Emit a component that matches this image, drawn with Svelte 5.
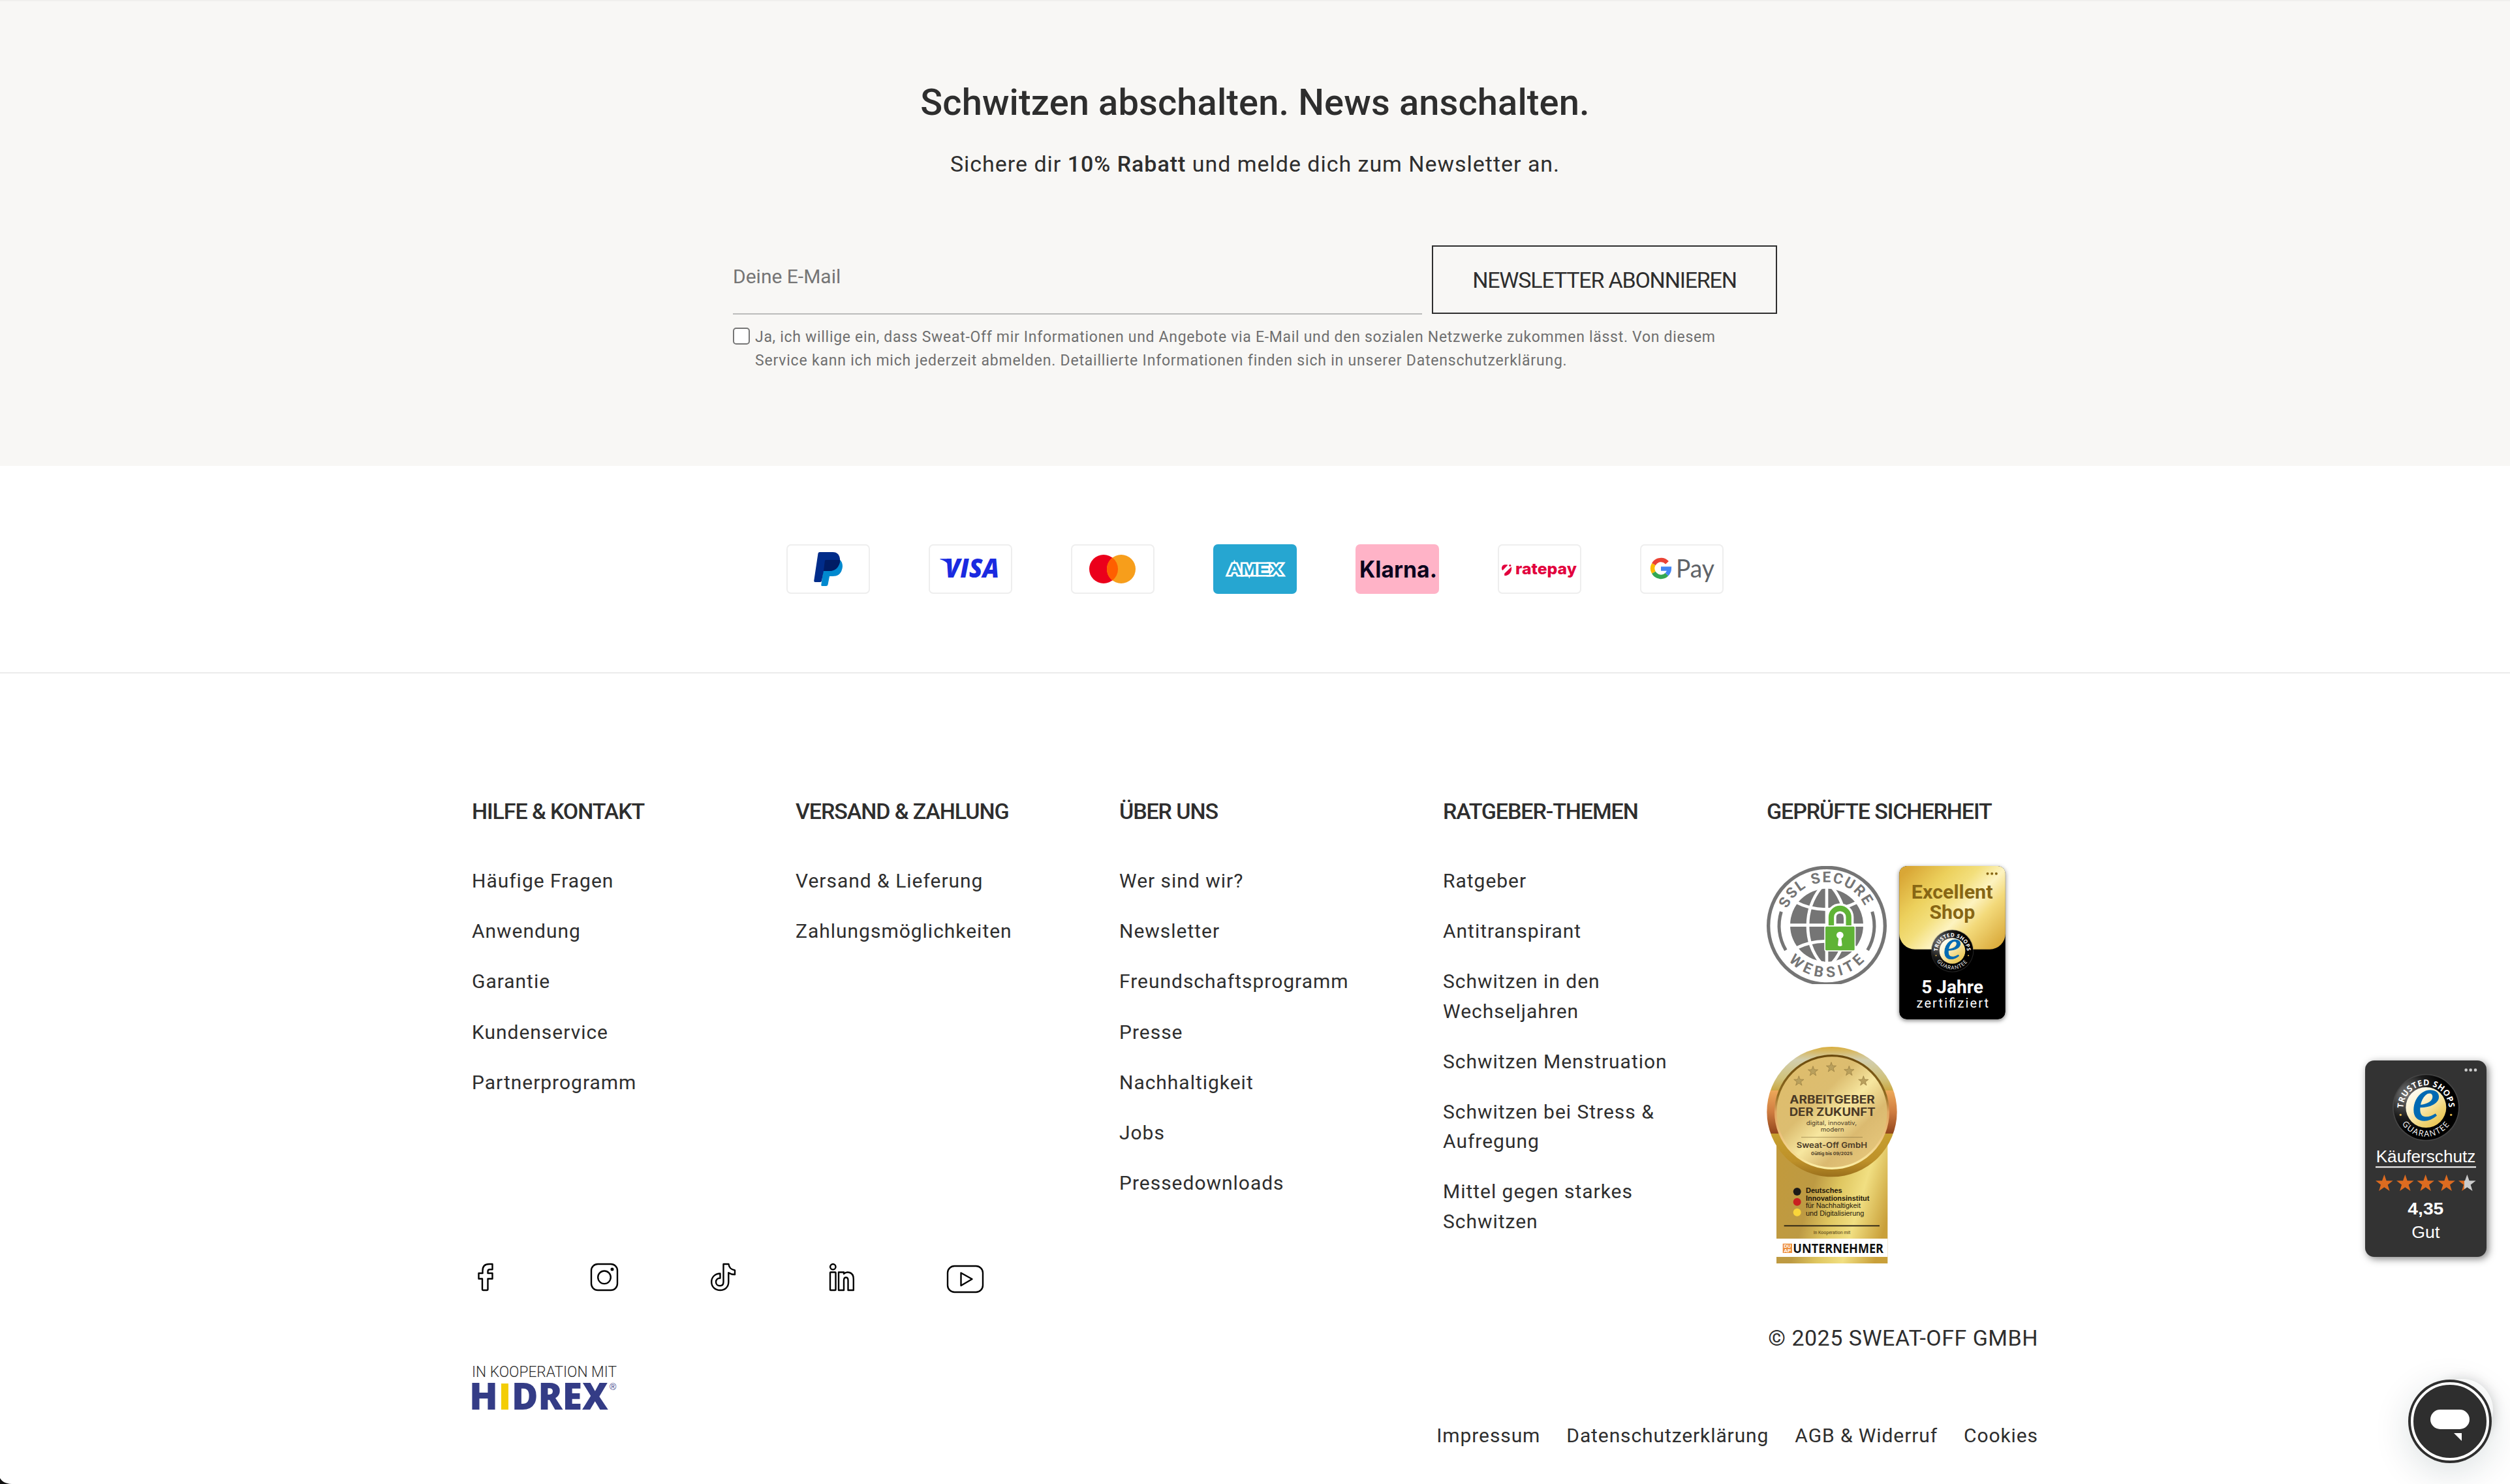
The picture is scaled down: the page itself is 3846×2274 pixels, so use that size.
<script>
  const columns = [
    {
      title: "HILFE & KONTAKT",
      links: ["Häufige Fragen", "Anwendung", "Garantie", "Kundenservice", "Partnerprogramm"],
    },
    {
      title: "VERSAND & ZAHLUNG",
      links: ["Versand & Lieferung", "Zahlungsmöglichkeiten"],
    },
    {
      title: "ÜBER UNS",
      links: [
        "Wer sind wir?",
        "Newsletter",
        "Freundschaftsprogramm",
        "Presse",
        "Nachhaltigkeit",
        "Jobs",
        "Pressedownloads",
      ],
    },
    {
      title: "RATGEBER-THEMEN",
      links: [
        "Ratgeber",
        "Antitranspirant",
        "Schwitzen in den Wechseljahren",
        "Schwitzen Menstruation",
        "Schwitzen bei Stress & Aufregung",
        "Mittel gegen starkes Schwitzen",
      ],
    },
  ];

  const legal = ["Impressum", "Datenschutzerklärung", "AGB & Widerruf", "Cookies"];

  const awardStars = [
    [199, 200],
    [264, 155],
    [348, 137],
    [430, 154],
    [496, 200],
  ];
  const ratingStars = [160, 256, 350, 446, 541];

  const star = (cx, cy, r) => {
    const points = [];
    for (let i = 0; i < 10; i++) {
      const radius = i % 2 ? r * 0.4 : r;
      const a = (Math.PI / 5) * i - Math.PI / 2;
      points.push(`${(cx + radius * Math.cos(a)).toFixed(1)},${(cy + radius * Math.sin(a)).toFixed(1)}`);
    }
    return points.join(" ");
  };

  let email = "";
  let consent = false;
</script>

<!-- Trusted Shops seal, drawn around 0,0 with a radius of 150 -->
{#snippet seal(id)}
  <defs>
    <radialGradient id="{id}-rim" cx="0.2" cy="0.3" r="0.6">
      <stop offset="0" stop-color="#777" />
      <stop offset="0.6" stop-color="#1c1c1c" />
      <stop offset="1" stop-color="#000" />
    </radialGradient>
    <linearGradient id="{id}-gold" x1="0.1" y1="0" x2="0.9" y2="1">
      <stop offset="0" stop-color="#fff" />
      <stop offset="0.35" stop-color="#fdf3cf" />
      <stop offset="0.7" stop-color="#f0d475" />
      <stop offset="1" stop-color="#e6bf45" />
    </linearGradient>
    <path id="{id}-top" d="M-105 4 A105 105 0 0 1 105 4" />
    <path id="{id}-bottom" d="M-111 75 A134 134 0 0 0 111 75" />
  </defs>
  <circle r="154" fill="#666" opacity="0.35" />
  <circle r="149" fill="url(#{id}-rim)" />
  <circle r="93" fill="url(#{id}-gold)" />
  <text class="seal-text" font-weight="700"><textPath href="#{id}-top" textLength="326">TRUSTED SHOPS</textPath></text>
  <text class="seal-text"><textPath href="#{id}-bottom" textLength="256">GUARANTEE</textPath></text>
  <circle cx="-117" cy="34" r="5" fill="#e9bb4c" />
  <circle cx="115" cy="34" r="5" fill="#e9bb4c" />
  <text class="seal-e" x="-63" y="57">e</text>
{/snippet}

<div class="page">
  <section class="newsletter">
    <h2>Schwitzen abschalten. News anschalten.</h2>
    <p class="sub">Sichere dir <strong>10% Rabatt</strong> und melde dich zum Newsletter an.</p>
    <form on:submit|preventDefault>
      <div class="row">
        <input class="email" type="text" placeholder="Deine E-Mail" bind:value={email} />
        <button type="submit">NEWSLETTER ABONNIEREN</button>
      </div>
      <label class="consent">
        <input type="checkbox" bind:checked={consent} />
        <span>
          Ja, ich willige ein, dass Sweat-Off mir Informationen und Angebote via E-Mail und den sozialen Netzwerke zukommen lässt. Von diesem<br />
          <span class="line2">Service kann ich mich jederzeit abmelden. Detaillierte Informationen finden sich in unserer Datenschutzerklärung.</span>
        </span>
      </label>
    </form>
  </section>

  <section class="payments">
    <svg class="card" viewBox="0 0 128 76">
      <path fill="#0089cf" d="M60 24H82C86 27 87 34 85 39C83 46 78 49 71 49H66L63.5 62Q63 64 61 64H55Q53 64 53.3 62L58.5 26Z" />
      <path fill="#002c8a" d="M51 12H71C79 12 83 18 82 27C80 36 74 41 66 41H57L54 56Q53.6 58 52 58H44Q42 58 42.2 56L48.5 14Q49 12 51 12Z" />
      <path fill="#001c64" d="M60.5 24H82Q82.3 25.5 82 27C80 36 74 41 66 41H57L58.8 26Q59 24 60.5 24Z" />
    </svg>
    <svg class="card" viewBox="0 0 128 76">
      <path fill="#1a2ae0" d="M17.5 22.3H31L34 38C30 29 25 25 17.5 23.3Z" />
      <text class="visa" x="25" y="51" textLength="83" lengthAdjust="spacingAndGlyphs">VISA</text>
    </svg>
    <svg class="card" viewBox="0 0 128 76">
      <circle cx="50" cy="38" r="22" fill="#eb001b" />
      <circle cx="77" cy="38" r="22" fill="#f79e1b" />
      <path fill="#ff5f00" d="M63.5 20.6A22 22 0 0 1 63.5 55.4A22 22 0 0 1 63.5 20.6Z" />
    </svg>
    <svg class="card amex-card" viewBox="0 0 128 76">
      <text class="amex" x="22" y="46.5" textLength="84" lengthAdjust="spacingAndGlyphs">AMEX</text>
    </svg>
    <svg class="card klarna-card" viewBox="0 0 128 76">
      <text class="klarna" x="6" y="50.5" textLength="119" lengthAdjust="spacingAndGlyphs">Klarna.</text>
    </svg>
    <svg class="card" viewBox="0 0 128 76">
      <g fill="#e2003d">
        <path d="M6 37C6 32 10 30.5 15.5 31.8L7.5 40Q6 39.5 6 37Z" />
        <path d="M21 34.5C22 42 18 48 10.5 48.3Q9.500 46.500 10.500 44.500Z" />
        <circle cx="18.8" cy="32.6" r="1.6" />
      </g>
      <text class="ratepay" x="27" y="46" textLength="94" lengthAdjust="spacingAndGlyphs">ratepay</text>
    </svg>
    <svg class="card" viewBox="0 0 128 76">
      <g fill="none" stroke-width="6.5">
        <path stroke="#ea4335" d="M41.5 28.2A12.8 12.8 0 0 0 20.9 30.6" />
        <path stroke="#fbbc04" d="M20.9 30.6A12.8 12.8 0 0 0 20.9 43.4" />
        <path stroke="#34a853" d="M20.9 43.4A12.8 12.8 0 0 0 41 46.2" />
        <path stroke="#4285f4" d="M41 46.2A12.8 12.8 0 0 0 44.8 37.5H32" />
      </g>
      <text class="gpay" x="55" y="51" textLength="59" lengthAdjust="spacingAndGlyphs">Pay</text>
    </svg>
  </section>

  <footer>
    <div class="main">
      <div class="left">
        <div class="columns">
          {#each columns as column}
            <div class="column">
              <h3>{column.title}</h3>
              <ul>
                {#each column.links as link}
                  <li>{link}</li>
                {/each}
              </ul>
            </div>
          {/each}
        </div>

        <div class="social">
          <svg width="42" height="42" viewBox="-9 0 42 42">
            <path d="M22.5 1H17.5C10 1 7.5 5.5 7.5 11V15H1.5V23.5H7V39.5Q7 41 8.5 41H14Q15.5 41 15.5 39.5V23.5H22.5V15H15.5V12C15.5 10 16.5 9.2 18.5 9.2H22.5Z" />
          </svg>
          <svg width="42" height="42" viewBox="0 0 42 42">
            <rect x="1" y="1" width="40" height="40" rx="10" />
            <circle cx="21" cy="21.3" r="9.8" />
            <circle cx="33" cy="9" r="1.3" />
          </svg>
          <svg width="42" height="42" viewBox="-2 0 42 42">
            <path d="M19.5 1H27.5C28 6.5 31.5 9.5 37 10.5V17C33 17 30 16 27.3 14.2V28.5C27.3 36 22 41 14.5 41C7 41 1.2 36 1.2 28.5C1.2 20.5 7 15.5 14.5 15.5V22.5C10.5 22.5 8 25 8 28.5C8 32 10.5 34.2 14 34.2C17.5 34.2 19.5 32 19.5 28.5Z" />
          </svg>
          <svg width="42" height="42" viewBox="-2 0 42 42">
            <circle cx="5.3" cy="5.2" r="4.2" />
            <rect x="1" y="13.5" width="8.5" height="27.5" rx="0.8" />
            <path d="M14 13.5H22V16C26 12 36.8 12 36.8 24V41H28.5V26C28.5 20 22 20 22 26V41H14Z" />
          </svg>
          <svg class="youtube" width="56" height="42" viewBox="0 0 56 42">
            <rect x="1" y="1" width="54" height="40" rx="10.5" />
            <path d="M21.5 11.5L38.5 21L21.5 31Z" />
          </svg>
        </div>

        <svg class="hidrex" width="230" height="74" viewBox="0 0 230 74">
          <text class="coop" x="0" y="23" textLength="222" lengthAdjust="spacingAndGlyphs">IN KOOPERATION MIT</text>
          <g class="brand">
            <text x="-4" y="73" textLength="44" lengthAdjust="spacingAndGlyphs">H</text>
            <rect x="45" y="33" width="11" height="40" fill="#f3cd05" />
            <text x="61" y="73" textLength="148" lengthAdjust="spacingAndGlyphs">DREX</text>
          </g>
          <text class="reg" x="211" y="43">®</text>
        </svg>
      </div>

      <div class="right">
        <h3>GEPRÜFTE SICHERHEIT</h3>
        <div class="badges">
          <svg width="184" height="181" viewBox="51 380 552 543">
            <defs>
              <path id="ssl-top" d="M146 577A195 195 0 0 1 508 577" />
              <path id="ssl-bottom" d="M152 815A238 238 0 0 0 502 815" />
            </defs>
            <circle cx="327" cy="655" r="268" fill="#fff" stroke="#757575" stroke-width="16" />
            <text class="ssl"><textPath href="#ssl-top" textLength="448">SSL SECURE</textPath></text>
            <text class="ssl"><textPath href="#ssl-bottom" textLength="392">WEBSITE</textPath></text>
            <g fill="none" stroke="#757575" stroke-width="15">
              <path d="M118 590A219 219 0 0 0 139 767" />
              <path d="M536 590A219 219 0 0 1 515 767" />
            </g>
            <circle cx="327" cy="652" r="168" fill="#757575" />
            <g fill="none" stroke="#fff" stroke-width="14">
              <path d="M327 480V825M155 652H500" />
              <path d="M300 480C220 580 220 730 300 825M354 480C434 580 434 730 354 825" />
              <path d="M190 548C270 590 384 590 464 548M190 756C270 716 384 716 464 756" />
            </g>
            <path d="M348 655V615A40 40 0 0 1 428 615V655" fill="none" stroke="#fff" stroke-width="46" />
            <path d="M348 665V615A40 40 0 0 1 428 615V665" fill="none" stroke="#5fb336" stroke-width="25" />
            <rect x="321" y="658" width="134" height="110" rx="5" fill="#5fb336" stroke="#fff" stroke-width="10" paint-order="stroke" />
            <circle cx="388" cy="698" r="16" fill="#fff" />
            <path d="M383 700L378 745Q388 753 398 745L393 700Z" fill="#fff" />
          </svg>

          <svg class="excellent" width="163" height="235" viewBox="659.5 380 489 705">
            <defs>
              <linearGradient id="foil" x1="0" y1="0.15" x2="1" y2="0.9">
                <stop offset="0" stop-color="#d9a736" />
                <stop offset="0.25" stop-color="#ecd05c" />
                <stop offset="0.42" stop-color="#f3df7c" />
                <stop offset="0.58" stop-color="#fdf3c0" />
                <stop offset="0.72" stop-color="#f3da7b" />
                <stop offset="1" stop-color="#d9a93a" />
              </linearGradient>
            </defs>
            <rect x="660" y="380" width="488" height="705" rx="34" fill="#000" />
            <path fill="url(#foil)" d="M660 414A34 34 0 0 1 694 380H1114A34 34 0 0 1 1148 414V690A72 72 0 0 1 1076 763H732A72 72 0 0 1 660 690Z" />
            <g fill="#876614">
              <circle cx="1066" cy="415" r="6" />
              <circle cx="1086" cy="415" r="6" />
              <circle cx="1106" cy="415" r="6" />
              <text class="ex-title" x="716" y="531" textLength="374" lengthAdjust="spacingAndGlyphs">Excellent</text>
              <text class="ex-title" x="799" y="623" textLength="209" lengthAdjust="spacingAndGlyphs">Shop</text>
            </g>
            <g transform="translate(904 770) scale(0.64)">{@render seal("small")}</g>
            <text class="ex-years" x="762" y="964" textLength="284" lengthAdjust="spacingAndGlyphs">5 Jahre</text>
            <text class="ex-cert" x="739" y="1031" textLength="332">zertifiziert</text>
          </svg>

          <svg class="award" width="200" height="332" viewBox="51 42 600 996">
            <defs>
              <linearGradient id="ribbon" x1="0" y1="0.3" x2="1" y2="0.7">
                <stop offset="0" stop-color="#c29a3c" />
                <stop offset="0.35" stop-color="#bd9a43" />
                <stop offset="0.55" stop-color="#dfc660" />
                <stop offset="0.75" stop-color="#f1df82" />
                <stop offset="1" stop-color="#c9a03a" />
              </linearGradient>
              <linearGradient id="ring" x1="0" y1="0" x2="0" y2="1">
                <stop offset="0" stop-color="#d9ae3e" />
                <stop offset="0.1" stop-color="#d2ceae" />
                <stop offset="0.25" stop-color="#d0c179" />
                <stop offset="0.336" stop-color="#caa845" />
                <stop offset="0.337" stop-color="#eda85a" />
                <stop offset="0.5" stop-color="#cf7c40" />
                <stop offset="0.665" stop-color="#93461c" />
                <stop offset="0.666" stop-color="#c7a02f" />
                <stop offset="0.88" stop-color="#bd9029" />
                <stop offset="1" stop-color="#9b701c" />
              </linearGradient>
              <linearGradient id="disc" x1="0.1" y1="0.1" x2="0.9" y2="0.9">
                <stop offset="0" stop-color="#dfbd6c" />
                <stop offset="0.35" stop-color="#dcbd70" />
                <stop offset="0.55" stop-color="#f7e7a0" />
                <stop offset="0.75" stop-color="#dbba70" />
                <stop offset="1" stop-color="#e6c77c" />
              </linearGradient>
              <linearGradient id="rim" x1="0" y1="0" x2="0" y2="1">
                <stop offset="0" stop-color="#6b4a0d" />
                <stop offset="0.35" stop-color="#8e6a20" />
                <stop offset="0.5" stop-color="#e2a561" />
                <stop offset="1" stop-color="#fbeea5" />
              </linearGradient>
            </defs>
            <rect x="96" y="341" width="511" height="697" fill="url(#ribbon)" />
            <circle cx="351" cy="341" r="299" fill="url(#ring)" />
            <circle cx="351" cy="342" r="259" fill="url(#disc)" stroke="url(#rim)" stroke-width="10" />
            {#each awardStars as [x, y]}
              <polygon points={star(x, y, 24)} fill="#b9a05d" stroke="#94793b" stroke-width="2" />
            {/each}
            <g class="award-text">
              <text class="big" x="157" y="304" textLength="391" lengthAdjust="spacingAndGlyphs">ARBEITGEBER</text>
              <text class="big" x="155" y="361" textLength="396" lengthAdjust="spacingAndGlyphs">DER ZUKUNFT</text>
              <text class="tag" x="233" y="402" textLength="232" lengthAdjust="spacingAndGlyphs">digital, innovativ,</text>
              <text class="tag" x="299" y="433" textLength="108" lengthAdjust="spacingAndGlyphs">modern</text>
              <path d="M210 458H492" stroke="#8b7440" stroke-width="2" />
              <text class="firm" x="188" y="507" textLength="325" lengthAdjust="spacingAndGlyphs">Sweat-Off GmbH</text>
              <text class="valid" x="255" y="539" textLength="191" lengthAdjust="spacingAndGlyphs">Gültig bis 09/2025</text>
            </g>
            <circle cx="191" cy="708" r="18" fill="#1d1a18" />
            <circle cx="191" cy="755" r="18" fill="#c92020" />
            <circle cx="191" cy="803" r="18" fill="#f9d53a" />
            <g class="institute">
              <text font-weight="700" x="231" y="713" textLength="167" lengthAdjust="spacingAndGlyphs">Deutsches</text>
              <text font-weight="700" x="231" y="749" textLength="292" lengthAdjust="spacingAndGlyphs">Innovationsinstitut</text>
              <text x="231" y="784" textLength="252" lengthAdjust="spacingAndGlyphs">für Nachhaltigkeit</text>
              <text x="231" y="820" textLength="268" lengthAdjust="spacingAndGlyphs">und Digitalisierung</text>
            </g>
            <path d="M131 865H570" stroke="#211a10" stroke-width="5" />
            <text class="koop" x="266" y="904" textLength="170" lengthAdjust="spacingAndGlyphs">In Kooperation mit</text>
            <rect x="96" y="924" width="511" height="84" fill="#fff" />
            <rect x="125" y="947" width="43" height="43" fill="#ee8f3c" />
            <text class="duap" x="130" y="967" textLength="33" lengthAdjust="spacingAndGlyphs">DU</text>
            <text class="duap" x="130" y="986" textLength="33" lengthAdjust="spacingAndGlyphs">AP</text>
            <text class="unternehmer" x="172" y="990" textLength="416" lengthAdjust="spacingAndGlyphs">UNTERNEHMER</text>
          </svg>
        </div>
        <div class="copyright">© 2025 SWEAT-OFF GMBH</div>
      </div>
    </div>

    <nav class="legal">
      {#each legal as item}
        <span>{item}</span>
      {/each}
    </nav>
  </footer>

  <div class="trust">
    <svg width="186" height="301" viewBox="72 74 558 903">
      <defs>
        <linearGradient id="part">
          <stop offset="0.35" stop-color="#dd6b20" />
          <stop offset="0.35" stop-color="#ccc" />
        </linearGradient>
      </defs>
      <g fill="#ccc">
        <circle cx="536" cy="118" r="7" />
        <circle cx="557" cy="118" r="7" />
        <circle cx="579" cy="118" r="7" />
      </g>
      <g transform="translate(352 290)">{@render seal("large")}</g>
      <g class="trust-text">
        <text x="122" y="542" textLength="458" lengthAdjust="spacingAndGlyphs">Käuferschutz</text>
        <rect x="120" y="561" width="462" height="6" />
        <text font-weight="700" x="268" y="783" textLength="165" lengthAdjust="spacingAndGlyphs">4,35</text>
        <text x="286" y="890" textLength="129" lengthAdjust="spacingAndGlyphs">Gut</text>
      </g>
      {#each ratingStars as x, i}
        <polygon points={star(x, 640, 42)} fill={i === 4 ? "url(#part)" : "#dd6b20"} />
      {/each}
    </svg>
  </div>

  <div class="chat-halo"></div>
  <div class="chat">
    <svg width="128" height="128" viewBox="0 0 128 128">
      <circle cx="64" cy="64" r="64" fill="#2e2e2e" />
      <circle cx="64" cy="64" r="58" fill="none" stroke="#fff" stroke-width="4" />
      <rect x="34" y="46" width="60" height="30" rx="15" fill="#fff" />
      <path d="M70 82H82V94Z" fill="#fff" />
    </svg>
  </div>

  <svg class="corner" width="18" height="10" viewBox="0 0 18 10">
    <path d="M0 1C3 6 8 9.5 18 10H0Z" fill="#111" />
  </svg>
</div>

<style>
  :global(body) {
    margin: 0;
    background: #fff;
    overflow: hidden;
  }

  .page {
    position: relative;
    height: 2274px;
    overflow: hidden;
    font-family: Roboto, "Liberation Sans", sans-serif;
    color: #2e2e2e;
  }

  h2,
  h3,
  p,
  ul {
    margin: 0;
    padding: 0;
    list-style: none;
  }

  svg {
    display: block;
    flex: none;
  }

  svg text {
    white-space: pre;
  }

  .newsletter {
    box-sizing: border-box;
    height: 714px;
    padding-top: 122px;
    border-top: 2px solid #f0efed;
    background: #f8f7f5;
    text-align: center;
  }

  h2 {
    font-size: 56px;
    line-height: 66px;
    font-weight: 500;
    letter-spacing: 0.13px;
  }

  .sub {
    margin-top: 39px;
    font-size: 34px;
    line-height: 44px;
    letter-spacing: 0.97px;
  }

  .sub strong {
    font-weight: 500;
  }

  form {
    width: 1600px;
    margin: 103px auto 0;
    text-align: left;
  }

  .row {
    display: flex;
    align-items: flex-start;
    gap: 15px;
  }

  .email {
    box-sizing: border-box;
    width: 1056px;
    height: 106px;
    padding: 0 0 9px;
    border: 0;
    border-bottom: 2px solid #bbb;
    background: none;
    font: 30px Roboto, sans-serif;
  }

  .email::placeholder {
    color: #757575;
  }

  button {
    box-sizing: border-box;
    width: 529px;
    height: 105px;
    padding: 1px 0 0;
    border: 2px solid #2e2e2e;
    background: none;
    color: #2e2e2e;
    font: 34px Roboto, sans-serif;
    letter-spacing: -1.2px;
  }

  .consent {
    display: flex;
    margin-top: 17px;
    gap: 8px;
    color: #6f6f6f;
    font-size: 23px;
    line-height: 36px;
    letter-spacing: 0.7px;
    white-space: nowrap;
  }

  .line2 {
    letter-spacing: 0.8px;
  }

  .consent input {
    appearance: none;
    box-sizing: border-box;
    flex: none;
    width: 26px;
    height: 26px;
    margin: 3px 0 0;
    border: 2px solid #767676;
    border-radius: 5px;
    background: #fff;
  }

  .payments {
    display: flex;
    justify-content: center;
    gap: 90px;
    padding: 120px 0 120px;
    border-bottom: 2px solid #ebebeb;
  }

  .card {
    box-sizing: border-box;
    width: 128px;
    height: 76px;
    border-radius: 7px;
    box-shadow: inset 0 0 0 2px #eee;
  }

  .amex-card {
    background: #26a6d1;
    box-shadow: none;
  }

  .klarna-card {
    background: #ffb3c7;
    box-shadow: none;
  }

  .visa {
    font: italic 800 40px "Open Sans", sans-serif;
    fill: #1a2ae0;
  }

  .amex {
    font: 700 24px "Liberation Sans", sans-serif;
    fill: #26a6d1;
    stroke: #fff;
    stroke-width: 5px;
    paint-order: stroke;
  }

  .klarna {
    font: 700 35px Inter, sans-serif;
    fill: #0b051d;
  }

  .ratepay {
    font: 800 24px Inter, sans-serif;
    fill: #e2003d;
  }

  .gpay {
    font: 39px Lato, sans-serif;
    fill: #5f6368;
  }

  footer {
    width: 2400px;
    margin: 0 auto;
    padding-top: 191px;
  }

  .main {
    display: flex;
  }

  .left {
    width: 1984px;
  }

  .right {
    width: 416px;
  }

  .columns {
    display: grid;
    grid-template-columns: repeat(4, 496px);
  }

  h3 {
    font-size: 34px;
    line-height: 40px;
    font-weight: 500;
    letter-spacing: -1.1px;
    white-space: nowrap;
  }

  ul {
    display: flex;
    flex-direction: column;
    gap: 32px;
    width: 380px;
    margin-top: 64px;
  }

  li {
    font-size: 30px;
    line-height: 45.2px;
    letter-spacing: 0.98px;
  }

  .social {
    display: flex;
    gap: 140px;
    margin-top: 42px;
  }

  .social svg {
    fill: none;
    stroke: #000;
    stroke-width: 2.4px;
    stroke-linejoin: round;
    overflow: visible;
  }

  .social .youtube {
    margin-top: 3px;
  }

  .hidrex {
    margin-top: 106px;
    overflow: visible;
  }

  .coop {
    font: 300 24px Roboto, sans-serif;
    fill: #2e2e2e;
  }

  .brand text {
    font: 800 56px "Open Sans", sans-serif;
    fill: #343c86;
  }

  .reg {
    font: 14px "Liberation Sans", sans-serif;
    fill: #343c86;
  }

  .badges {
    display: flex;
    flex-wrap: wrap;
    align-items: flex-start;
    column-gap: 19px;
    width: 400px;
    margin-top: 64px;
  }

  .excellent {
    border-radius: 12px;
    box-shadow: 0 2px 6px rgba(0, 0, 0, 0.5);
  }

  .award {
    margin-top: 42px;
  }

  .ssl {
    font: 700 68px Roboto, sans-serif;
    fill: #757575;
  }

  .seal-text {
    font-family: "Open Sans", sans-serif;
    font-size: 38px;
    fill: #fff;
  }

  .seal-e {
    font: italic 285px "Liberation Serif", serif;
    fill: #006ab3;
    stroke: #006ab3;
    stroke-width: 5px;
  }

  .ex-title {
    font-size: 86px;
    font-weight: 700;
  }

  .ex-years {
    font-size: 83px;
    font-weight: 700;
    fill: #fff;
  }

  .ex-cert {
    font-size: 60px;
    fill: #fff;
  }

  .award-text {
    font-family: Inter, sans-serif;
    fill: #4a3a26;
  }

  .big {
    font-size: 51px;
    font-weight: 700;
  }

  .tag {
    font-size: 27px;
  }

  .firm {
    font-size: 36px;
    font-weight: 600;
  }

  .valid {
    font-size: 20px;
    font-weight: 700;
  }

  .institute {
    font: 31px "Liberation Sans", sans-serif;
    fill: #1d160a;
  }

  .koop {
    font-size: 20px;
    fill: #4f3c14;
  }

  .duap {
    font: 700 21px "Liberation Sans", sans-serif;
    fill: #fff;
  }

  .unternehmer {
    font: 700 58px "Open Sans", sans-serif;
    fill: #111;
  }

  .copyright {
    margin-top: 94px;
    font-size: 34px;
    line-height: 40px;
    text-align: right;
    white-space: nowrap;
    letter-spacing: 0.5px;
  }

  .legal {
    display: flex;
    justify-content: flex-end;
    gap: 40px;
    margin-top: 19px;
    font-size: 30px;
    line-height: 40px;
    letter-spacing: 0.9px;
  }

  /* floating widgets */
  .trust {
    position: absolute;
    left: 3624px;
    top: 1625px;
    width: 186px;
    height: 301px;
    border-radius: 14px;
    background: #333;
    box-shadow: 3px 3px 12px rgba(0, 0, 0, 0.5);
  }

  .trust-text {
    font: 80px "Liberation Sans", sans-serif;
    fill: #fff;
  }

  .chat-halo {
    position: absolute;
    left: 3726px;
    top: 2113px;
    width: 94px;
    height: 94px;
    border-radius: 50%;
    background: #fff;
    box-shadow: 0 2px 20px rgba(0, 0, 0, 0.2);
  }

  .chat {
    position: absolute;
    left: 3690px;
    top: 2114px;
    border-radius: 50%;
    box-shadow: 0 14px 56px rgba(0, 40, 50, 0.14);
  }

  .corner {
    position: absolute;
    left: 0;
    bottom: 0;
  }
</style>
